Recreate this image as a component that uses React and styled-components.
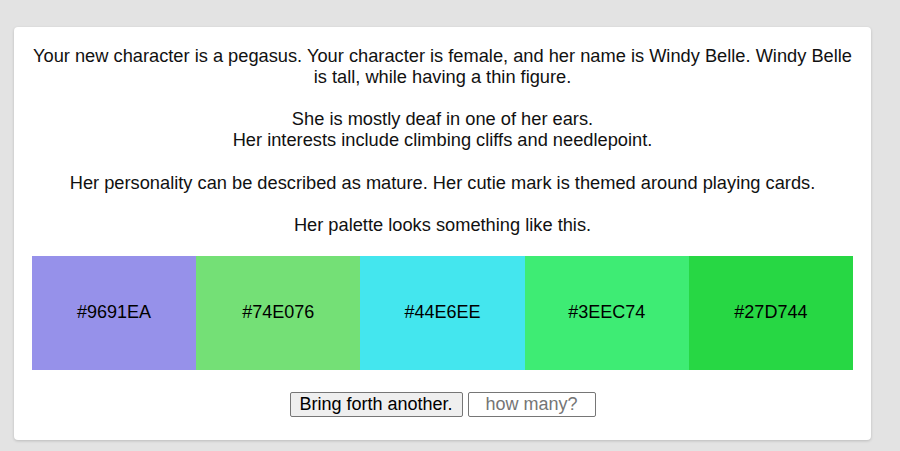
import React from "react";
import styled, { createGlobalStyle } from "styled-components";

const GlobalStyle = createGlobalStyle`
  body {
    margin: 0;
    background: #e3e3e3;
    font-family: "Liberation Sans", Arial, sans-serif;
  }
`;

const Page = styled.div`
  padding: 27px 0 10px 14px;
`;

const Card = styled.section`
  width: 857px;
  box-sizing: border-box;
  background: #fff;
  border-radius: 4px;
  box-shadow: 0 1px 3px rgba(0, 0, 0, 0.18);
  padding: 18px 18px 23px;
  text-align: center;
  color: #111;
`;

const Story = styled.p`
  margin: 0 0 21px;
  font-size: 18.25px;
  line-height: 21.1px;
`;

const Palette = styled.div`
  display: grid;
  grid-template-columns: repeat(5, 1fr);
  height: 114px;
`;

const Swatch = styled.div`
  display: flex;
  align-items: center;
  justify-content: center;
  background: ${props => props.color};
  font-size: 18px;
  color: #000;
`;

const Controls = styled.div`
  display: flex;
  justify-content: center;
  gap: 5px;
  margin-top: 22px;
`;

const Button = styled.button`
  height: 25px;
  width: 173px;
  padding: 0;
  font-family: "Liberation Sans", Arial, sans-serif;
  font-size: 18px;
  color: #000;
  background: #efefef;
  border: 1px solid #767676;
  border-radius: 2px;
`;

const CountInput = styled.input`
  height: 25px;
  width: 128px;
  box-sizing: border-box;
  padding: 0 4px;
  font-family: "Liberation Sans", Arial, sans-serif;
  font-size: 18px;
  text-align: center;
  border: 1px solid #767676;
  border-radius: 2px;
  &::placeholder {
    color: #757575;
  }
`;

const palette = ["#9691EA", "#74E076", "#44E6EE", "#3EEC74", "#27D744"];

const App = () => (
  <Page>
    <GlobalStyle />
    <Card>
      <Story>
        Your new character is a pegasus. Your character is female, and her name is Windy Belle. Windy Belle is tall, while having a thin figure.
        <br />
        <br />
        She is mostly deaf in one of her ears.
        <br />
        Her interests include climbing cliffs and needlepoint.
        <br />
        <br />
        Her personality can be described as mature. Her cutie mark is themed around playing cards.
        <br />
        <br />
        Her palette looks something like this.
      </Story>
      <Palette>
        {palette.map(c => (
          <Swatch key={c} color={c}>
            {c}
          </Swatch>
        ))}
      </Palette>
      <Controls>
        <Button>Bring forth another.</Button>
        <CountInput placeholder="how many?" />
      </Controls>
    </Card>
  </Page>
);

export default App;
